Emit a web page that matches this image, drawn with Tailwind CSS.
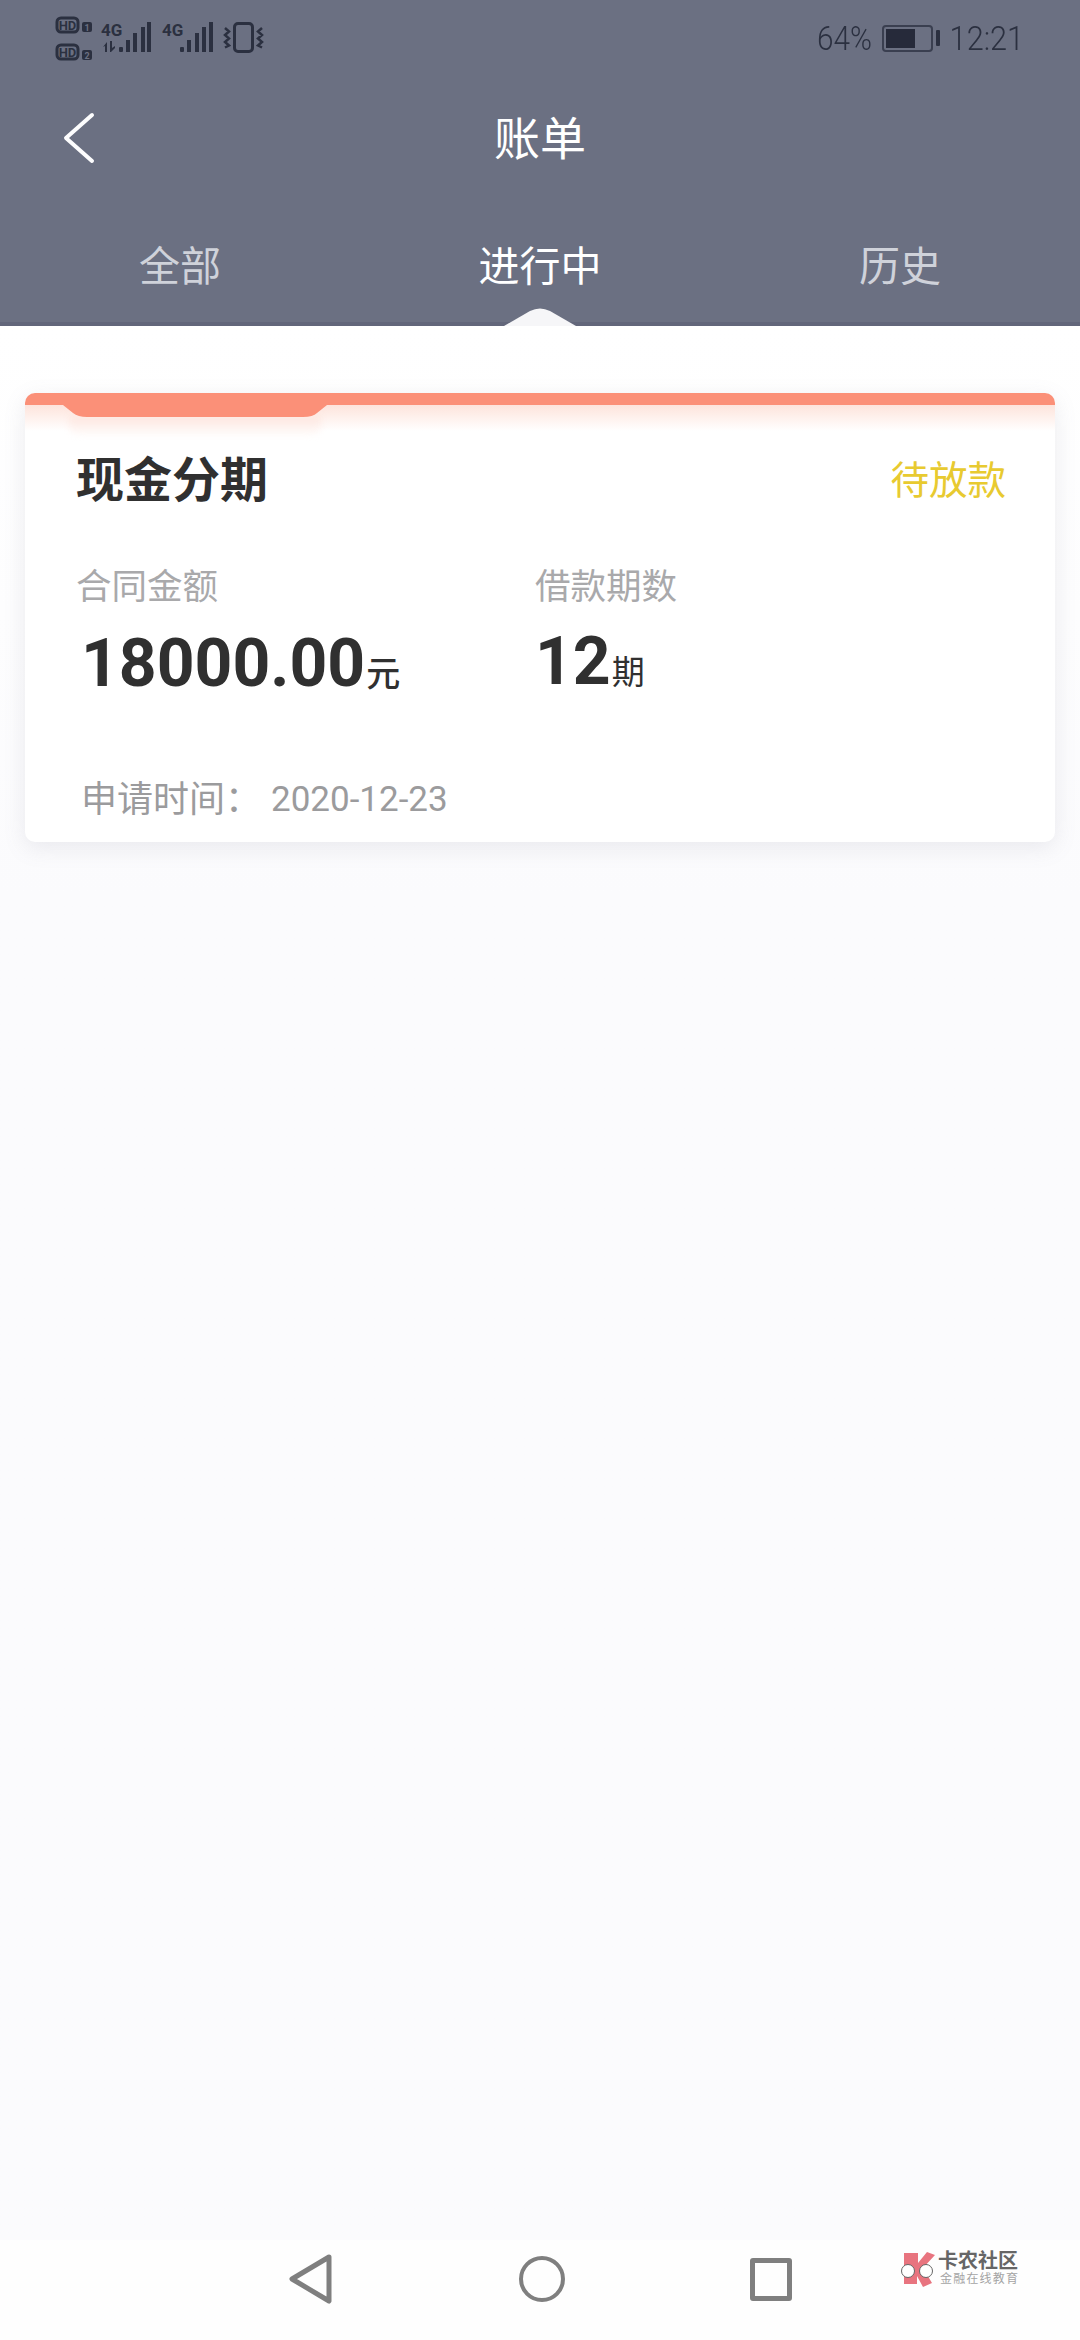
<!DOCTYPE html>
<html lang="zh-CN">
<head>
<meta charset="utf-8">
<script src="https://cdn.jsdelivr.net/npm/@tailwindcss/browser@4"></script>
<title>账单</title>
</head>
<body class="m-0">
<div class="w-[1080px] h-[2340px] flex flex-col overflow-hidden bg-[#fbfbfd] font-['Roboto','Noto_Sans_CJK_SC',sans-serif]">
  <!-- Header -->
  <header class="relative h-[326px] shrink-0 bg-[#6b7082] border-b-[4px] border-[#62667a]">
    <div class="h-[76px] flex items-start justify-between pl-[54px] pr-[56px]">
      <svg width="216" height="64" viewBox="54 0 216 64" class="text-[#2b3040]" fill="currentColor">
        <g fill="none" stroke="currentColor" stroke-width="3">
          <rect x="57" y="18" width="21" height="14" rx="4"/>
          <rect x="57" y="45" width="21" height="14" rx="4"/>
        </g>
        <text x="67.5" y="30" text-anchor="middle" font-size="13" font-weight="700" font-family="Roboto">HD</text>
        <text x="67.5" y="57" text-anchor="middle" font-size="13" font-weight="700" font-family="Roboto">HD</text>
        <rect x="82" y="22" width="10" height="10" rx="2"/>
        <rect x="82" y="50" width="10" height="10" rx="2"/>
        <text x="87" y="31" text-anchor="middle" font-size="9" font-weight="700" fill="#6b7082" font-family="Roboto">1</text>
        <text x="87" y="59" text-anchor="middle" font-size="9" font-weight="700" fill="#6b7082" font-family="Roboto">2</text>
        <text x="101" y="36" font-size="17" font-weight="700" font-family="Roboto">4G</text>
        <text x="162" y="36" font-size="17" font-weight="700" font-family="Roboto">4G</text>
        <path d="M103 47l4-5v10h-2v-6zM110 41h2v7l3-2v2l-4 4h-1z"/>
        <rect x="119" y="47" width="4" height="5" rx="1"/>
        <rect x="126" y="40" width="4" height="12"/>
        <rect x="133" y="33" width="4" height="19"/>
        <rect x="141" y="27" width="4" height="25"/>
        <rect x="147" y="22" width="4" height="30"/>
        <rect x="180" y="47" width="4" height="5" rx="1"/>
        <rect x="187" y="40" width="4" height="12"/>
        <rect x="195" y="33" width="4" height="19"/>
        <rect x="202" y="27" width="4" height="25"/>
        <rect x="209" y="22" width="4" height="30"/>
        <rect x="234.5" y="23.5" width="18" height="28" rx="3.5" fill="none" stroke="currentColor" stroke-width="3"/>
        <path d="M225 28l4 3.500-4 3.500 4 3.500-4 3.500 4 3.500-4 2M262 28l-4 3.500 4 3.500-4 3.500 4 3.500-4 3.500 4 2" fill="none" stroke="currentColor" stroke-width="2.500"/>
      </svg>
      <div class="flex items-center h-[76px] text-[#2b3040]">
        <span class="text-[33px] font-light leading-none scale-x-[0.9] origin-right">64%</span>
        <div class="flex items-center gap-[3px] ml-[10px] mr-[4px]">
          <div class="w-[51px] h-[27px] border-[2px] border-[#3a3f50] rounded-[4px] p-[2px]">
            <div class="w-[29px] h-full bg-[#262a3a]"></div>
          </div>
          <div class="w-[4px] h-[16px] bg-[#2b3040] rounded-[1px]"></div>
        </div>
        <span class="text-[33px] font-light leading-none scale-x-[0.93] origin-right">12:21</span>
      </div>
    </div>
    <div class="relative h-[80px] flex items-center justify-center mt-[23px]">
      <svg class="absolute left-[60px] top-[12px]" width="36" height="54" viewBox="0 0 36 54" fill="none" stroke="#fdfdfe" stroke-width="4" stroke-linecap="round" stroke-linejoin="round">
        <path d="M32 4 6 27l26 23"/>
      </svg>
      <h1 class="text-[46px] leading-none text-white font-normal">账单</h1>
    </div>
    <nav class="grid grid-cols-3 mt-[68px] text-[41px] leading-none text-center">
      <span class="text-[#cfd2da]">全部</span>
      <span class="text-white">进行中</span>
      <span class="text-[#cfd2da]">历史</span>
    </nav>
    <svg class="absolute left-[500px] bottom-[-4px]" width="80" height="20" viewBox="0 0 80 20"><path d="M4 20 30 5Q40 0 50 5L76 20Z" fill="#f6f6f8"/></svg>
  </header>

  <!-- Content -->
  <main class="flex-1 px-[25px] pt-[67px] bg-gradient-to-b from-white to-[#fbfbfd] to-[30%]">
    <section class="relative h-[449px] bg-white rounded-[10px] shadow-[0_6px_22px_rgba(120,120,140,0.14)] overflow-hidden">
      <div class="absolute inset-x-0 top-[12px] h-[26px] bg-gradient-to-b from-[#fde4dc] to-white"></div>
      <div class="absolute left-[44px] top-[22px] w-[252px] h-[22px] rounded-b-[12px] blur-[3px] bg-gradient-to-b from-[#fde4dc] to-white"></div>
      <div class="relative h-[12px] bg-[#fb9078]"></div>
      <svg class="absolute left-[38px] top-[12px]" width="264" height="12" viewBox="0 0 264 12"><path d="M0 0H264L254 8Q250 12 240 12H24Q15 12 10 8Z" fill="#fb9078"/></svg>

      <div class="relative flex items-center justify-between pl-[51px] pr-[49px] pt-[48px]">
        <h2 class="text-[48px] leading-[56px] font-bold text-[#303030]">现金分期</h2>
        <span class="text-[38.500px] leading-[56px] text-[#e8ca30]">待放款</span>
      </div>
      <div class="flex pl-[51px] pt-[56px]">
        <div class="w-[459px]">
          <p class="text-[35.500px] leading-[44px] text-[#a9a9ab]">合同金额</p>
          <p class="pl-[5px] pt-[20px] h-[86px] flex items-baseline text-[#303030]">
            <span class="text-[66px] leading-[70px] font-bold">18000.00</span><span class="text-[34px] font-medium ml-[1px]">元</span>
          </p>
        </div>
        <div>
          <p class="text-[35.500px] leading-[44px] text-[#a9a9ab]">借款期数</p>
          <p class="pt-[18px] h-[86px] flex items-baseline text-[#303030]">
            <span class="text-[66px] leading-[70px] font-bold">12</span><span class="text-[33px] ml-[1px]">期</span>
          </p>
        </div>
      </div>
      <p class="pl-[56px] pt-[83px] flex items-center text-[36px] leading-[44px] text-[#9b9b9d]">
        <span class="w-[190px]">申请时间：</span><span class="text-[35px]">2020-12-23</span>
      </p>
    </section>
  </main>

  <!-- Bottom nav -->
  <footer class="relative h-[100px] shrink-0 bg-[#fefefe]">
    <div class="absolute inset-0 flex items-center justify-center gap-[185px] pb-[22px]">
      <svg width="46" height="50" viewBox="0 0 46 50" fill="none" stroke="#7f7f7f" stroke-width="5" stroke-linejoin="round"><path d="M41 3 4 25l37 22Z"/></svg>
      <div class="w-[46px] h-[46px] rounded-full border-[4px] border-[#7f7f7f]"></div>
      <div class="w-[42px] h-[43px] rounded-[3px] border-[5px] border-[#7f7f7f]"></div>
    </div>
    <div class="absolute left-[900px] top-[10px] flex gap-[2px]">
      <svg width="36" height="37" viewBox="0 0 36 37">
        <path d="M4 3h14v10L27 2l8 3-12 13 9 15-9 4-6-11v8H4Z" fill="#e8747f"/>
        <circle cx="8" cy="21" r="6.500" fill="#fff" stroke="#666" stroke-width="1"/>
        <circle cx="26" cy="21" r="6.500" fill="#fff" stroke="#666" stroke-width="1"/>
      </svg>
      <div class="flex flex-col">
        <span class="text-[20px] leading-[22px] font-bold text-[#666]">卡农社区</span>
        <span class="text-[12px] leading-[14px] tracking-[1.200px] text-[#a4a4a4] pl-[2px]">金融在线教育</span>
      </div>
    </div>
  </footer>
</div>
</body>
</html>
